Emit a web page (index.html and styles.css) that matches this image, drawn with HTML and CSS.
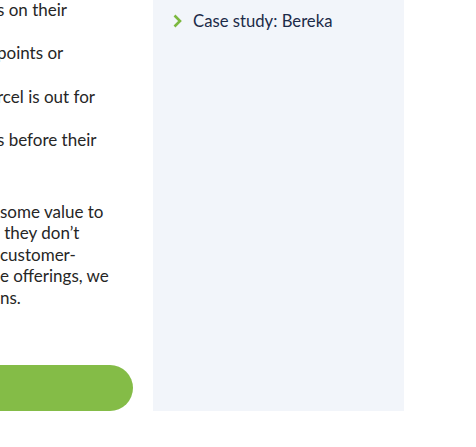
FILE: index.html
```html
<!DOCTYPE html>
<html>
<head>
<meta charset="utf-8">
<link rel="stylesheet" href="styles.css">
</head>
<body>
<div class="page">
  <div class="main">
    <ul class="points">
      <li>s on their</li>
      <li>points or</li>
      <li>rcel is out for</li>
      <li>s before their</li>
    </ul>
    <p class="para">some value to<br><span class="clip">, </span>they don’t<br>customer-<br>e offerings, we<br>ns.</p>
    <a class="cta" href="#"></a>
  </div>
  <aside class="side">
    <a class="side-link" href="#">
      <svg class="chev" width="9" height="14" viewBox="0 0 9 14"><path d="M1.5 1.5 L7 7 L1.5 12.5" fill="none" stroke="#7cb83f" stroke-width="2.6"/></svg>
      <span>Case study: Bereka</span>
    </a>
  </aside>
</div>
</body>
</html>
```
FILE: styles.css
```css
html, body {
  margin: 0;
  padding: 0;
  background: #fff;
  overflow: hidden;
}
body {
  font-family: Lato, "Open Sans", sans-serif;
  color: #262626;
}
.page {
  display: flex;
  align-items: flex-start;
  gap: 20px;
  width: 476px;
  height: 447px;
}
.main {
  width: 133px;
  flex: none;
  margin-top: -1.5px;
  display: flex;
  flex-direction: column;
  overflow: hidden;
}
.points {
  list-style: none;
  margin: 0;
  padding: 0;
}
.points li {
  font-size: 17px;
  line-height: 21.83px;
  height: 43.67px;
  margin-left: -3px;
  white-space: nowrap;
}
.para {
  margin: 27.5px 0 0 0;
  font-size: 17px;
  line-height: 21.6px;
  white-space: nowrap;
}
.clip {
  margin-left: -4px;
}
.cta {
  display: block;
  margin-top: 56px;
  height: 46px;
  border-radius: 0 23px 23px 0;
  background: #84bc47;
}
.side {
  flex: none;
  width: 251px;
  height: 411px;
  background: #f2f5fa;
  box-sizing: border-box;
  padding: 11px 20px 0 20px;
}
.side-link {
  display: flex;
  align-items: center;
  gap: 11px;
  text-decoration: none;
  color: #1c2b48;
  font-size: 16.7px;
  line-height: 20px;
}
.chev {
  flex: none;
}
```
